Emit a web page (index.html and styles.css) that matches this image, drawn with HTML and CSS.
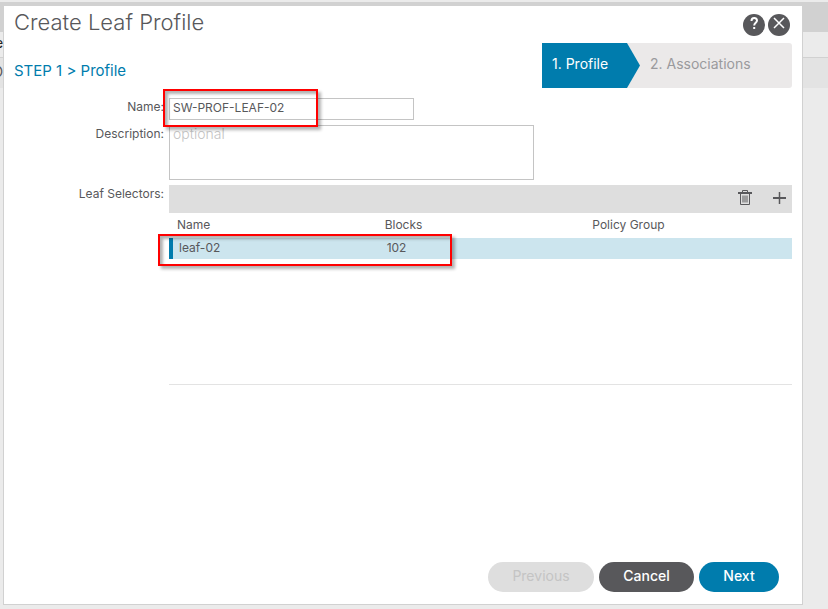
FILE: index.html
```html
<!DOCTYPE html>
<html lang="en">
<head>
    <meta charset="UTF-8">
    <meta name="viewport" content="width=device-width, initial-scale=1.0">
    <title>Create Leaf Profile</title>
    <link rel="stylesheet" href="styles.css">
</head>
<body>
    <div class="backdrop">
        <div class="topbar"></div>
        <div class="menu">e</div>
        <div class="submenu">D</div>
    </div>
    <form class="dialog">
        <header class="dialog-header">
            <h1>Create Leaf Profile</h1>
            <div class="window-tools">
                <button type="button" class="round" aria-label="Help">
                    <svg width="22" height="22" viewBox="0 0 22 22"><path d="M8.500 7C8.500 3 14 3.200 14 6.500C14 8.800 11.200 8.800 11.200 11.500" stroke-width="2"/><path d="M11.200 13v2" stroke-width="2"/></svg>
                </button>
                <button type="button" class="round" aria-label="Close">
                    <svg width="22" height="22" viewBox="0 0 22 22"><path d="M6 4l10 10M16 4L6 14" stroke-width="1.500"/></svg>
                </button>
            </div>
        </header>
        <div class="step-row">
            <h2>STEP 1 &gt; Profile</h2>
            <ol class="wizard">
                <li class="active">1. Profile</li>
                <li>2. Associations</li>
            </ol>
        </div>
        <div class="fields">
            <label for="name">Name:</label>
            <div class="name-field">
                <input id="name" type="text" value="SW-PROF-LEAF-02">
                <span class="highlight"></span>
            </div>
            <label for="description">Description:</label>
            <textarea id="description" placeholder="optional"></textarea>
            <span class="label" id="selectors">Leaf Selectors:</span>
            <div class="selectors">
                <div class="toolbar">
                    <button type="button" aria-label="Delete">
                        <svg width="16" height="16" viewBox="0 0 16 16"><path d="M1 3h14" stroke-width="2"/><path d="M5.500 2V.5h5V2M3.500 4v10.500h9V4M6 5.500v7M8 5.500v7M10 5.500v7"/></svg>
                    </button>
                    <button type="button" aria-label="Add">
                        <svg width="16" height="16" viewBox="0 0 16 16"><path d="M2 8h13" stroke-width="2"/><path d="M8.500 2v12" stroke-width="1.500"/></svg>
                    </button>
                </div>
                <div class="grid-body">
                    <table aria-labelledby="selectors">
                        <thead>
                            <tr><th>Name</th><th>Blocks</th><th>Policy Group</th></tr>
                        </thead>
                        <tbody>
                            <tr><td>leaf-02</td><td>102</td><td></td></tr>
                        </tbody>
                    </table>
                    <span class="highlight"></span>
                </div>
            </div>
        </div>
        <footer>
            <button type="button" class="btn previous" disabled>Previous</button>
            <button type="button" class="btn cancel">Cancel</button>
            <button type="submit" class="btn next">Next</button>
        </footer>
    </form>
</body>
</html>
```
FILE: styles.css
```css
*{
    box-sizing: border-box;
}
body{
    display: grid;
    min-height: 100vh;
    margin: 0;
    background-color: #ebebeb;
    color: #58585b;
    font-family: Inter, "Liberation Sans", sans-serif;
    font-size: 12px;
}
button,input,textarea{
    font-family: inherit;
    color: inherit;
}
button{
    border: none;
    padding: 0;
    cursor: pointer;
}
svg{
    display: block;
    fill: none;
    stroke: currentColor;
}

/* page behind the dialog */
.backdrop,.dialog{
    grid-area: 1 / 1;
}
.backdrop{
    padding-top: 2px;
    font-size: 14px;
}
.topbar{
    height: 30px;
    background-color: #d1d1d1;
}
.menu{
    height: 26px;
    line-height: 22px;
    border-bottom: 1px solid #d1d1d1;
    color: #222;
    text-indent: -5px;
}
.submenu{
    height: 30px;
    line-height: 28px;
    background-color: #e3e3e3;
    text-indent: -7px;
}

.dialog{
    display: flex;
    flex-direction: column;
    z-index: 1;
    margin: 6px 25px 4px 3px;
    padding: 0 10px 12px;
    background-color: white;
    border: 1px solid #d1d1d1;
    border-top: none;
}
.dialog-header{
    display: flex;
    justify-content: space-between;
    height: 37px;
}
h1{
    margin: 0;
    font-size: 22px;
    font-weight: 300;
    line-height: 32px;
}
.window-tools{
    display: flex;
    gap: 3px;
    padding: 8px 2px 0 0;
}
.round{
    width: 22px;
    height: 22px;
    border-radius: 50%;
    background-color: #58585b;
    color: white;
}
.step-row{
    display: flex;
    justify-content: space-between;
    margin-bottom: 10px;
}
h2{
    margin: 0;
    color: #007cad;
    font-size: 15px;
    font-weight: 400;
    line-height: 56px;
    height: 45px;
}
.wizard{
    display: flex;
    width: 250px;
    margin: 0;
    padding: 0;
    list-style: none;
    border-radius: 3px;
    background-color: #ebe9e9;
    color: #9a9a9d;
    font-size: 14px;
    line-height: 42px;
}
.wizard li{
    padding-left: 10px;
}
.wizard .active{
    width: 98px;
    background-color: #007cad;
    color: white;
    clip-path: polygon(0 0, 85px 0, 100% 50%, 85px 100%, 0 100%);
}

.fields{
    display: grid;
    grid-template-columns: 150px 1fr;
    gap: 5px;
}
label,.label{
    line-height: 18px;
    text-align: right;
}
.name-field,.grid-body{
    position: relative;
}
input,textarea{
    display: block;
    border: 1px solid #c4c4c4;
    background-color: white;
    outline: none;
}
input{
    width: 245px;
    height: 22px;
    padding: 0 3px 3px;
    font-size: 12px;
}
textarea{
    width: 365px;
    height: 55px;
    padding: 0 3px;
    font-size: 14px;
    font-weight: 300;
    line-height: 16px;
    resize: none;
}
textarea::placeholder{
    color: #c4c4c4;
}
.toolbar{
    display: flex;
    justify-content: flex-end;
    align-items: center;
    gap: 18px;
    height: 28px;
    padding: 0 5px 2px 0;
    background-color: #dedede;
}
.toolbar button{
    background: none;
}
.grid-body{
    height: 172px;
    border-bottom: 1px solid #e3e3e3;
}
table{
    width: 100%;
    table-layout: fixed;
    border-collapse: collapse;
    text-align: left;
}
th{
    height: 25px;
    padding: 0 8px 2px;
    font-weight: 400;
}
td{
    height: 21px;
    padding: 0 10px 2px;
    background-color: #cce5ee;
}
td:first-child{
    box-shadow: inset 4px 0 #007cad;
}

/* red frames around the values to check */
.highlight{
    position: absolute;
    border: 2px solid #f00;
    box-shadow: 3px 3px 3px rgba(0, 0, 0, 0.3), inset 3px 3px 3px rgba(0, 0, 0, 0.3);
    pointer-events: none;
}
.name-field .highlight{
    top: -9px;
    left: -6px;
    width: 155px;
    height: 38px;
}
.grid-body .highlight{
    top: 21px;
    left: -11px;
    width: 294px;
    height: 32px;
}

footer{
    display: flex;
    justify-content: flex-end;
    gap: 5px;
    margin-top: auto;
    padding-right: 13px;
}
.btn{
    height: 30px;
    padding-bottom: 3px;
    border-radius: 15px;
    font-size: 14px;
    font-weight: 500;
    color: white;
}
.previous{
    width: 106px;
    background-color: #dedede;
    color: #c4c4c4;
    font-weight: 400;
}
.cancel{
    width: 95px;
    background-color: #58585b;
}
.next{
    width: 80px;
    background-color: #007cad;
}
```
